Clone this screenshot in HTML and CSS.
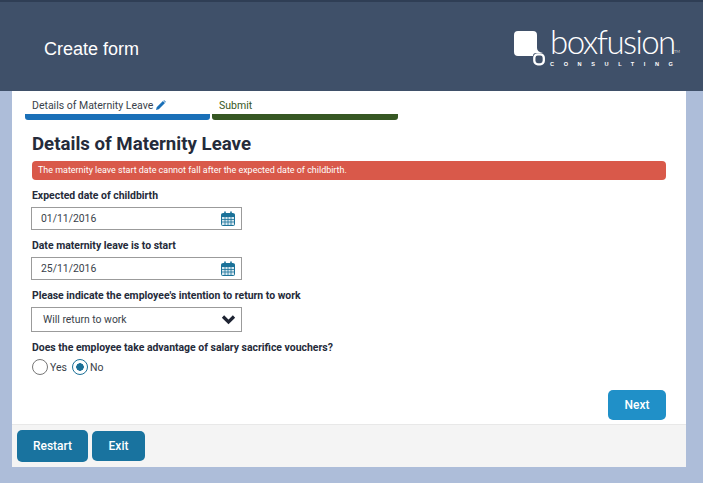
FILE: index.html
```html
<!DOCTYPE html>
<html lang="en">
<head>
  <meta charset="UTF-8">
  <meta name="viewport" content="width=device-width, initial-scale=1.0">
  <title>Create form</title>
  <link rel="stylesheet" href="styles.css">
</head>
<body>
  <header class="top-bar">
    <h1 class="page-title">Create form</h1>
    <div class="logo">
      <svg class="logo-mark" width="31" height="35" viewBox="0 0 31 35">
        <path d="M4 0H19Q23 0 23 4V17Q23 21 29 22H22Q19 22 19 25H4Q0 25 0 21V4Q0 0 4 0Z" fill="#fff"/>
        <rect x="20.300" y="23.300" width="9.500" height="10" rx="3.500" fill="none" stroke="#fff" stroke-width="2.300"/>
      </svg>
      <div class="logo-text">
        <span class="logo-name">boxfusion<span class="logo-tm">TM</span></span>
        <span class="logo-sub">CONSULTING</span>
      </div>
    </div>
  </header>

  <main class="panel">
    <div class="panel-body">
      <nav class="steps">
        <div class="step step-current">
          <span class="step-label">Details of Maternity Leave
            <svg class="step-icon" width="10" height="10" viewBox="0 0 10 10"><path d="M0 10L.7 7.200 6.900 1 9 3.100 2.800 9.300ZM7.500.4Q8 0 8.500.4L9.600 1.500Q10 2 9.600 2.500L9.500 2.600 7.400.5Z" fill="#1a70b8"/></svg>
          </span>
        </div>
        <div class="step step-next">
          <span class="step-label">Submit</span>
        </div>
      </nav>

      <h2 class="form-title">Details of Maternity Leave</h2>
      <div class="alert">The maternity leave start date cannot fall after the expected date of childbirth.</div>

      <div class="field">
        <label class="field-label">Expected date of childbirth</label>
        <div class="input-box">
          <span>01/11/2016</span>
          <svg class="cal-icon" width="14" height="15" viewBox="0 0 14 15"><use href="#cal"/></svg>
        </div>
      </div>

      <div class="field">
        <label class="field-label">Date maternity leave is to start</label>
        <div class="input-box">
          <span>25/11/2016</span>
          <svg class="cal-icon" width="14" height="15" viewBox="0 0 14 15"><use href="#cal"/></svg>
        </div>
      </div>

      <div class="field">
        <label class="field-label">Please indicate the employee's intention to return to work</label>
        <div class="input-box select-box">
          <span>Will return to work</span>
          <svg width="15" height="10" viewBox="0 0 15 10"><path d="M2 1.500L7.500 7 13 1.500" fill="none" stroke="#1f2433" stroke-width="3.200"/></svg>
        </div>
      </div>

      <div class="field">
        <label class="field-label">Does the employee take advantage of salary sacrifice vouchers?</label>
        <div class="radios">
          <span class="radio"></span><span class="radio-text">Yes</span>
          <span class="radio radio-on"></span><span class="radio-text">No</span>
        </div>
      </div>

      <div class="actions">
        <button class="btn btn-next">Next</button>
      </div>
    </div>

    <footer class="panel-foot">
      <button class="btn btn-foot btn-restart">Restart</button>
      <button class="btn btn-foot btn-exit">Exit</button>
    </footer>
  </main>

  <svg width="0" height="0" class="defs">
    <symbol id="cal" viewBox="0 0 14 15">
      <path d="M1.500 2.500H12.500Q13.500 2.500 13.500 3.500V13.500Q13.500 14.500 12.500 14.500H1.500Q.5 14.500 .5 13.500V3.500Q.5 2.500 1.500 2.500Z" fill="#d8e8f0" stroke="#1b7299"/>
      <path d="M.5 3H13.500V6H.5Z" fill="#1b7299"/>
      <path d="M4 .5V3.500M10 .5V3.500" stroke="#1b7299" stroke-width="1.600" fill="none"/>
      <path d="M.5 8.500H13.500M.5 11H13.500M4 6V14.500M7 6V14.500M10 6V14.500" stroke="#1b7299" stroke-width=".8" fill="none"/>
    </symbol>
  </svg>
</body>
</html>
```
FILE: styles.css
```css
* {
  box-sizing: border-box;
}

body {
  margin: 0;
  height: 483px;
  overflow: hidden;
  background-color: #adbdd9;
  font-family: Roboto, "Liberation Sans", sans-serif;
  color: #252b3a;
}

.defs {
  display: block;
}

/* header */
.top-bar {
  height: 91px;
  display: flex;
  align-items: center;
  justify-content: space-between;
  padding: 5px 23px 0 44px;
  background-color: #3f5069;
  border-top: 2px solid #2f3e55;
}
.page-title {
  margin: 0;
  font-family: "Liberation Sans", Arial, sans-serif;
  font-size: 18px;
  font-weight: 400;
  color: #fff;
}
.logo {
  display: flex;
  align-items: flex-start;
  gap: 5px;
  color: #fff;
}
.logo-text {
  display: flex;
  flex-direction: column;
  width: 130px;
}
.logo-name {
  position: relative;
  font-family: Lato, "Open Sans", sans-serif;
  font-weight: 300;
  font-size: 33px;
  line-height: 21px;
  letter-spacing: -1.550px;
}
.logo-tm {
  position: absolute;
  left: 124px;
  bottom: -2px;
  font-size: 4px;
  line-height: 4px;
  letter-spacing: 0;
}
.logo-sub {
  font-family: "Liberation Sans", Arial, sans-serif;
  font-size: 5.600px;
  font-weight: 700;
  line-height: 7px;
  letter-spacing: 9.600px;
  margin-top: 9px;
  white-space: nowrap;
}

/* main panel */
.panel {
  width: 674px;
  height: 376px;
  margin-left: 12px;
  background: #fff;
  display: flex;
  flex-direction: column;
}
.panel-body {
  flex: 1;
  padding: 0 20px 0 19px;
}

.steps {
  display: flex;
  gap: 2px;
  margin-left: -6px;
  width: 373px;
}
.step {
  height: 29px;
  padding: 8px 0 0 7px;
  border-bottom: 6px solid;
  border-radius: 0 0 3px 3px;
  font-size: 10.500px;
  line-height: 14px;
}
.step-current {
  width: 185px;
  border-color: #1a70b8;
  color: #3a3f4a;
}
.step-next {
  width: 186px;
  border-color: #365723;
  color: #365723;
}
.step-icon {
  vertical-align: -1px;
}

.form-title {
  margin: 11px 0 3px 1px;
  font-size: 18.650px;
  line-height: 27px;
  font-weight: 700;
}

.alert {
  height: 19px;
  padding-left: 6px;
  margin-left: 1px;
  background-color: #d9594a;
  border-radius: 4px;
  color: #fff;
  font-size: 8.950px;
  line-height: 19px;
}

.field {
  margin-top: 9px;
}
.field-label {
  display: block;
  font-size: 10.450px;
  font-weight: 700;
  line-height: 14px;
  margin-bottom: 4px;
  margin-left: 1px;
}
.input-box {
  width: 211px;
  height: 23px;
  display: flex;
  align-items: center;
  justify-content: space-between;
  padding: 0 6px 0 9px;
  border: 1px solid #9b9b9b;
  background: #fff;
  font-size: 10.400px;
  color: #3a3f4a;
}
.cal-icon {
  display: block;
}
.select-box {
  height: 25px;
  padding: 0 5px 0 11px;
}

.radios {
  display: flex;
  align-items: center;
  margin-left: 1px;
}
.radio {
  width: 16px;
  height: 16px;
  border: 1px solid #777;
  border-radius: 50%;
}
.radio-on {
  border-color: #1b6f96;
  background: radial-gradient(circle, #1b6f96 0, #1b6f96 3.500px, #fff 4px);
}
.radio-text {
  font-size: 10.500px;
  color: #3a3f4a;
  margin: 0 5px 0 2px;
}

.actions {
  display: flex;
  justify-content: flex-end;
  margin-top: 15px;
}

.btn {
  border: 0;
  color: #fff;
  font-family: Roboto, "Liberation Sans", sans-serif;
  font-size: 12px;
  font-weight: 500;
  border-radius: 5px;
}
.btn-next {
  width: 58px;
  height: 30px;
  background-color: #2090c8;
}

.panel-foot {
  flex: none;
  height: 43px;
  display: flex;
  align-items: center;
  gap: 4px;
  padding-left: 5px;
  background-color: #f4f4f4;
  border-top: 1px solid #e8e8e8;
}
.btn-foot {
  background-color: #19739f;
}
.btn-restart {
  width: 71px;
  height: 32px;
}
.btn-exit {
  width: 53px;
  height: 30px;
}
```
